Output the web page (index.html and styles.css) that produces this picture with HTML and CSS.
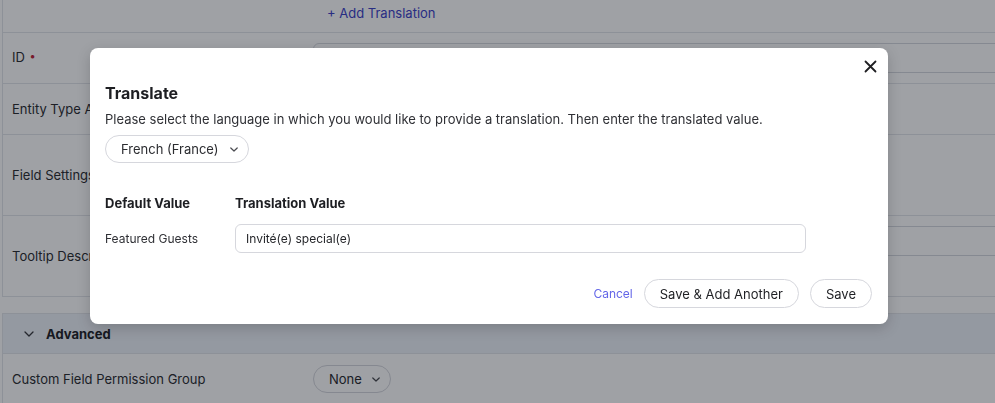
FILE: index.html
```html
<!DOCTYPE html>
<html lang="en">
<head>
<meta charset="utf-8">
<title>Translate</title>
<link rel="stylesheet" href="styles.css">
</head>
<body>
<div class="page">
  <section class="panel">
    <div class="row row-top">
      <div class="label"></div>
      <div class="value"><a class="link" href="#">+ Add Translation</a></div>
    </div>
    <div class="row row-id">
      <div class="label">ID <span class="req">•</span></div>
      <div class="value"><div class="bg-input wide"></div></div>
    </div>
    <div class="row row-entity">
      <div class="label">Entity Type Association</div>
      <div class="value"></div>
    </div>
    <div class="row row-tall">
      <div class="label">Field Settings</div>
      <div class="value"></div>
    </div>
    <div class="row row-tall row-tooltip">
      <div class="label">Tooltip Description</div>
      <div class="value"><div class="bg-input wide"></div></div>
    </div>
  </section>
  <section class="panel panel-adv">
    <div class="adv-head">
      <svg class="chev" width="10" height="6" viewBox="0 0 10 6"><path d="M1 1l4 4 4-4" fill="none" stroke="currentColor" stroke-width="1.3" stroke-linecap="round" stroke-linejoin="round"/></svg>
      <span>Advanced</span>
    </div>
    <div class="row row-perm">
      <div class="label">Custom Field Permission Group</div>
      <div class="value">
        <div class="pill pill-none">None
          <svg class="chev-s" width="8" height="5" viewBox="0 0 8 5"><path d="M0.8 1l3.2 3 3.2-3" fill="none" stroke="currentColor" stroke-width="1.2" stroke-linecap="round" stroke-linejoin="round"/></svg>
        </div>
      </div>
    </div>
  </section>
</div>

<div class="overlay">
  <div class="modal">
    <button class="close" aria-label="Close">
      <svg width="13" height="13" viewBox="0 0 13 13"><path d="M1.5 1.5l10 10M11.5 1.5l-10 10" stroke="#1f1f22" stroke-width="1.8" stroke-linecap="round"/></svg>
    </button>
    <h2 class="title">Translate</h2>
    <p class="desc">Please select the language in which you would like to provide a translation. Then enter the translated value.</p>
    <div class="pill lang">French (France)
      <svg class="chev-s" width="8" height="5" viewBox="0 0 8 5"><path d="M0.8 1l3.2 3 3.2-3" fill="none" stroke="currentColor" stroke-width="1.2" stroke-linecap="round" stroke-linejoin="round"/></svg>
    </div>
    <div class="grid">
      <div class="th">Default Value</div>
      <div class="th">Translation Value</div>
      <div class="td">Featured Guests</div>
      <div class="td"><div class="input">Invité(e) special(e)</div></div>
    </div>
    <div class="footer">
      <a class="cancel" href="#">Cancel</a>
      <button class="btn">Save &amp; Add Another</button>
      <button class="btn">Save</button>
    </div>
  </div>
</div>
</body>
</html>
```

FILE: styles.css
```css
* { box-sizing: border-box; }
html, body { margin: 0; padding: 0; }
body {
  font-family: Inter, "Noto Sans", sans-serif;
  color: #2b2c30;
  background: #ffffff;
  width: 995px;
  height: 403px;
  overflow: hidden;
  font-size: 13px;
}
.page {
  padding-left: 2px;
}
.panel {
  border-left: 1px solid #e3e5ea;
  background: #ffffff;
}
.row {
  display: grid;
  grid-template-columns: 310px 1fr;
  border-bottom: 1px solid #e3e5ea;
  align-items: center;
}
.label {
  padding-left: 9px;
  font-size: 13px;
  white-space: nowrap;
  color: #2e2f33;
}
.req { color: #c0263b; font-size: 11px; position: relative; top: -2px; margin-left: 1px; }
.row-top { height: 33px; align-items: start; }
.row-top .value { padding-top: 5px; padding-left: 14px; }
.link { color: #3f45c8; text-decoration: none; font-size: 13px; line-height: 16px; }
.row-id { height: 51px; align-items: start; }
.row-id .label { padding-top: 16px; }
.row-id .value { padding-top: 10px; }
.row-entity { height: 51px; }
.row-tall { height: 81px; }
.row-tooltip .value { align-self: start; padding-top: 10px; }
.bg-input {
  height: 30px;
  border: 1px solid #d6d9df;
  border-radius: 6px;
}
.bg-input.wide { width: 720px; }
.panel-adv { margin-top: 16px; }
.adv-head {
  height: 41px;
  background: #eef2f8;
  border-top: 1px solid #e3e5ea;
  border-bottom: 1px solid #e3e5ea;
  display: flex;
  align-items: center;
  padding-left: 21px;
  gap: 12px;
  font-weight: 700;
  font-size: 13px;
  color: #24252a;
}
.chev { color: #3a3b40; }
.row-perm { height: 50px; border-bottom: none; }
.pill {
  display: inline-flex;
  align-items: center;
  border: 1px solid #d6d7dd;
  border-radius: 999px;
  height: 28px;
  font-size: 13px;
  color: #2b2c30;
  background: #fff;
}
.pill-none { padding: 0 10px 0 15px; gap: 10px; height: 28px; }
.chev-s { color: #4a4b50; }

.overlay {
  position: fixed;
  inset: 0;
  background: rgba(2, 8, 18, 0.38);
}
.modal {
  position: absolute;
  left: 90px;
  top: 48px;
  width: 798px;
  height: 276px;
  background: #ffffff;
  border-radius: 8px;
  box-shadow: 0 4px 14px rgba(0, 0, 0, 0.18);
  padding: 34px 16px 16px 15px;
}
.close {
  position: absolute;
  right: 11px;
  top: 12px;
  border: 0;
  background: none;
  padding: 0;
  width: 13px;
  height: 13px;
  cursor: pointer;
  display: block;
}
.close svg { display: block; }
.title {
  margin: 0;
  font-size: 16px;
  line-height: 22px;
  font-weight: 700;
  color: #1d1e22;
}
.desc {
  margin: 5px 0 0;
  font-size: 13px;
  line-height: 20px;
  color: #2f3035;
}
.lang {
  margin-top: 6px;
  padding: 0 10px 0 15px;
  gap: 11px;
  height: 28px;
}
.grid {
  display: grid;
  grid-template-columns: 130px 571px;
  row-gap: 12px;
  margin-top: 31px;
  align-items: center;
}
.th {
  font-weight: 700;
  font-size: 13px;
  line-height: 18px;
  color: #1d1e22;
}
.td { font-size: 12px; color: #2f3035; }
.input {
  height: 29px;
  border: 1px solid #d6d7dd;
  border-radius: 6px;
  display: flex;
  align-items: center;
  padding-left: 10px;
  font-size: 12px;
  color: #26272b;
}
.footer {
  margin-top: 26px;
  display: flex;
  justify-content: flex-end;
  align-items: center;
  gap: 11px;
}
.cancel {
  color: #6366e8;
  text-decoration: none;
  font-size: 12px;
}
.btn {
  font-family: Inter, "Noto Sans", sans-serif;
  height: 29px;
  border: 1px solid #d6d7dd;
  border-radius: 999px;
  background: #fff;
  padding: 0 15px;
  font-size: 13px;
  color: #1f2024;
}
```
